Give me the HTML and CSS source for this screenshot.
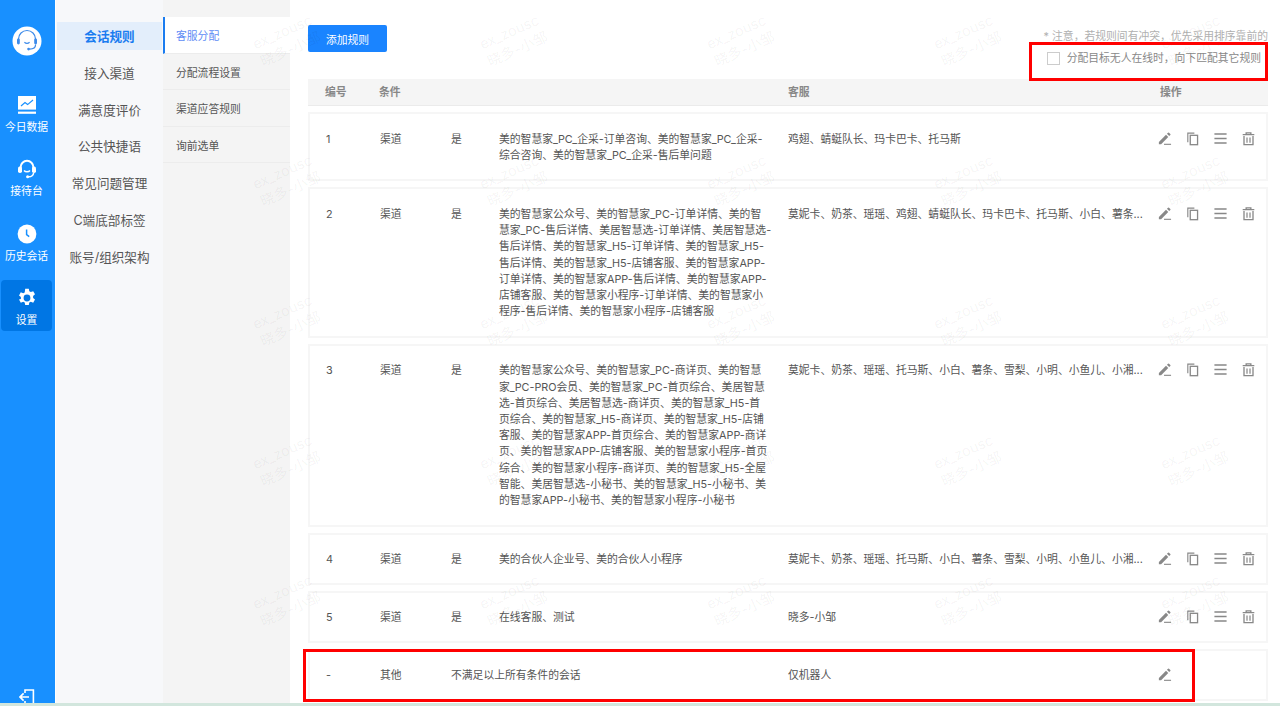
FILE: index.html
```html
<!DOCTYPE html>
<html lang="zh-CN">
<head>
    <meta charset="UTF-8">
    <meta name="viewport" content="width=device-width, initial-scale=1.0">
    <title>会话规则</title>
    <link rel="stylesheet" href="styles.css">
</head>
<body>
    <svg class="icon-defs" width="0" height="0">
        <defs>
            <symbol id="i-edit" viewBox="0 0 16 16"><path d="M2 11.6 9.6 4l2.4 2.4L4.4 14H2z" fill="currentColor"/><path d="M10.6 3 11.8 1.8a.7.7 0 0 1 1 0l1.4 1.4a.7.7 0 0 1 0 1L13 5.4z" fill="currentColor"/><path d="M7.5 14.2H15" stroke="currentColor" stroke-width="1.2"/></symbol>
            <symbol id="i-copy" viewBox="0 0 16 16"><path d="M3 12V2.2h7" fill="none" stroke="currentColor" stroke-width="1.2"/><rect x="5.6" y="4.6" width="7.8" height="10" fill="none" stroke="currentColor" stroke-width="1.4"/></symbol>
            <symbol id="i-menu" viewBox="0 0 16 16"><path d="M1.5 3.2h13M1.5 8h13M1.5 12.8h13" stroke="currentColor" stroke-width="1.5"/></symbol>
            <symbol id="i-trash" viewBox="0 0 16 16"><path d="M1.8 3.9h12.4M5.5 3.6V2h5v1.6" fill="none" stroke="currentColor" stroke-width="1.4"/><path d="M3.2 5.4v9.2h9.6V5.4" fill="none" stroke="currentColor" stroke-width="1.4"/><path d="M6.4 7v5.4M9.6 7v5.4" stroke="currentColor" stroke-width="1.3"/></symbol>
        </defs>
    </svg>

    <div class="app">
        <nav class="nav">
            <div class="nav-logo">
                <svg width="30" height="30" viewBox="0 0 30 30">
                    <circle cx="15" cy="15" r="14.5" fill="#fff"/>
                    <path d="M6.5 15.5v-2.5a8.5 8.5 0 0 1 17 0v2.5" fill="none" stroke="#3d8bea" stroke-width="1.2"/>
                    <rect x="5" y="12.4" width="2.8" height="6" rx="1.4" fill="#3d8bea"/>
                    <rect x="22.2" y="12.4" width="2.8" height="6" rx="1.4" fill="#3d8bea"/>
                    <path d="M23.6 18.5c0 3-2.8 4.6-6 4.6" fill="none" stroke="#3d8bea" stroke-width="1.2"/>
                    <circle cx="16.6" cy="23.1" r="1.4" fill="#3d8bea"/>
                    <path d="M12.4 16.2c1.4 1.2 3.8 1.2 5.2 0" fill="none" stroke="#3d8bea" stroke-width="1.2"/>
                </svg>
            </div>
            <a class="nav-item">
                <svg width="20" height="20" viewBox="0 0 20 20">
                    <path d="M1 1h18v13.6H1z" fill="#fff"/>
                    <path d="M4 11l4-3.4 2.6 2L16 5" fill="none" stroke="#1890ff" stroke-width="1.2"/>
                    <rect x="1" y="16.6" width="18" height="2.2" fill="#fff"/>
                </svg>
                <span>今日数据</span>
            </a>
            <a class="nav-item">
                <svg width="20" height="20" viewBox="0 0 20 20">
                    <path d="M3.6 10V8.2a6.4 6.4 0 0 1 12.8 0V10" fill="none" stroke="#fff" stroke-width="2"/>
                    <rect x="1" y="7.6" width="4" height="6.4" rx="1.8" fill="#fff"/>
                    <rect x="15" y="7.6" width="4" height="6.4" rx="1.8" fill="#fff"/>
                    <path d="M7 11.5c1.4 1.7 4.6 1.7 6 0" fill="none" stroke="#fff" stroke-width="1.4"/>
                    <path d="M16.6 14c-.3 2.6-2.6 3.8-5 3.8" fill="none" stroke="#fff" stroke-width="1.5"/>
                    <circle cx="10.6" cy="17.8" r="1.5" fill="#fff"/>
                </svg>
                <span>接待台</span>
            </a>
            <a class="nav-item">
                <svg width="20" height="20" viewBox="0 0 20 20">
                    <circle cx="10" cy="10" r="9.4" fill="#fff"/>
                    <path d="M9.6 5.4v5.2l2.6 2" fill="none" stroke="#1890ff" stroke-width="1.5"/>
                </svg>
                <span>历史会话</span>
            </a>
            <a class="nav-item active">
                <svg width="20" height="20" viewBox="0 0 20 20">
                    <path fill="#fff" fill-rule="evenodd" d="M8.2.8h3.6l.5 2.5 1.5.8 2.4-.9 1.8 3.1-1.9 1.7v1.9l1.9 1.7-1.8 3.1-2.4-.9-1.5.8-.5 2.5H8.2l-.5-2.5-1.5-.8-2.4.9-1.8-3.1L3.9 11V9.1L2 7.4l1.8-3.1 2.4.9 1.5-.8zM10 6.6a3.4 3.4 0 1 0 0 6.8 3.4 3.4 0 0 0 0-6.8z"/>
                </svg>
                <span>设置</span>
            </a>
            <div class="nav-exit">
                <svg width="16" height="16" viewBox="0 0 16 16">
                    <path d="M6 4V1h8.4v14H6v-3" fill="none" stroke="#fff" stroke-width="1.6"/>
                    <path d="M1 8h9M4.6 4.4 1 8l3.6 3.6" fill="none" stroke="#fff" stroke-width="1.6"/>
                </svg>
            </div>
        </nav>

        <aside class="menu">
            <a class="menu-item active">会话规则</a>
            <a class="menu-item">接入渠道</a>
            <a class="menu-item">满意度评价</a>
            <a class="menu-item">公共快捷语</a>
            <a class="menu-item">常见问题管理</a>
            <a class="menu-item">C端底部标签</a>
            <a class="menu-item">账号/组织架构</a>
        </aside>

        <aside class="submenu">
            <a class="submenu-item active">客服分配</a>
            <a class="submenu-item">分配流程设置</a>
            <a class="submenu-item">渠道应答规则</a>
            <a class="submenu-item">询前选单</a>
        </aside>

        <main class="content">
            <div class="toolbar">
                <button class="btn-add" type="button">添加规则</button>
                <div class="toolbar-side">
                    <p class="note">* 注意，若规则间有冲突，优先采用排序靠前的</p>
                    <label class="check">
                        <span class="check-box"></span>
                        <span class="check-label">分配目标无人在线时，向下匹配其它规则</span>
                    </label>
                </div>
            </div>

            <div class="rule-head">
                <span>编号</span>
                <span>条件</span>
                <span></span>
                <span></span>
                <span>客服</span>
                <span>操作</span>
            </div>

            <div class="rule">
                <span>1</span>
                <span>渠道</span>
                <span>是</span>
                <p class="rule-text">美的智慧家_PC_企采-订单咨询、美的智慧家_PC_企采-<br>综合咨询、美的智慧家_PC_企采-售后单问题</p>
                <p class="rule-agents">鸡翅、蜻蜓队长、玛卡巴卡、托马斯</p>
                <div class="ops">
                    <svg class="op"><use href="#i-edit"/></svg>
                    <svg class="op"><use href="#i-copy"/></svg>
                    <svg class="op"><use href="#i-menu"/></svg>
                    <svg class="op"><use href="#i-trash"/></svg>
                </div>
            </div>

            <div class="rule">
                <span>2</span>
                <span>渠道</span>
                <span>是</span>
                <p class="rule-text">美的智慧家公众号、美的智慧家_PC-订单详情、美的智<br>慧家_PC-售后详情、美居智慧选-订单详情、美居智慧选-<br>售后详情、美的智慧家_H5-订单详情、美的智慧家_H5-<br>售后详情、美的智慧家_H5-店铺客服、美的智慧家APP-<br>订单详情、美的智慧家APP-售后详情、美的智慧家APP-<br>店铺客服、美的智慧家小程序-订单详情、美的智慧家小<br>程序-售后详情、美的智慧家小程序-店铺客服</p>
                <p class="rule-agents">莫妮卡、奶茶、瑶瑶、鸡翅、蜻蜓队长、玛卡巴卡、托马斯、小白、薯条...</p>
                <div class="ops">
                    <svg class="op"><use href="#i-edit"/></svg>
                    <svg class="op"><use href="#i-copy"/></svg>
                    <svg class="op"><use href="#i-menu"/></svg>
                    <svg class="op"><use href="#i-trash"/></svg>
                </div>
            </div>

            <div class="rule">
                <span>3</span>
                <span>渠道</span>
                <span>是</span>
                <p class="rule-text">美的智慧家公众号、美的智慧家_PC-商详页、美的智慧<br>家_PC-PRO会员、美的智慧家_PC-首页综合、美居智慧<br>选-首页综合、美居智慧选-商详页、美的智慧家_H5-首<br>页综合、美的智慧家_H5-商详页、美的智慧家_H5-店铺<br>客服、美的智慧家APP-首页综合、美的智慧家APP-商详<br>页、美的智慧家APP-店铺客服、美的智慧家小程序-首页<br>综合、美的智慧家小程序-商详页、美的智慧家_H5-全屋<br>智能、美居智慧选-小秘书、美的智慧家_H5-小秘书、美<br>的智慧家APP-小秘书、美的智慧家小程序-小秘书</p>
                <p class="rule-agents">莫妮卡、奶茶、瑶瑶、托马斯、小白、薯条、雪梨、小明、小鱼儿、小湘...</p>
                <div class="ops">
                    <svg class="op"><use href="#i-edit"/></svg>
                    <svg class="op"><use href="#i-copy"/></svg>
                    <svg class="op"><use href="#i-menu"/></svg>
                    <svg class="op"><use href="#i-trash"/></svg>
                </div>
            </div>

            <div class="rule rule-single">
                <span>4</span>
                <span>渠道</span>
                <span>是</span>
                <p class="rule-text">美的合伙人企业号、美的合伙人小程序</p>
                <p class="rule-agents">莫妮卡、奶茶、瑶瑶、托马斯、小白、薯条、雪梨、小明、小鱼儿、小湘...</p>
                <div class="ops">
                    <svg class="op"><use href="#i-edit"/></svg>
                    <svg class="op"><use href="#i-copy"/></svg>
                    <svg class="op"><use href="#i-menu"/></svg>
                    <svg class="op"><use href="#i-trash"/></svg>
                </div>
            </div>

            <div class="rule rule-single">
                <span>5</span>
                <span>渠道</span>
                <span>是</span>
                <p class="rule-text">在线客服、测试</p>
                <p class="rule-agents">晓多-小邹</p>
                <div class="ops">
                    <svg class="op"><use href="#i-edit"/></svg>
                    <svg class="op"><use href="#i-copy"/></svg>
                    <svg class="op"><use href="#i-menu"/></svg>
                    <svg class="op"><use href="#i-trash"/></svg>
                </div>
            </div>

            <div class="rule rule-single">
                <span>-</span>
                <span>其他</span>
                <p class="rule-wide">不满足以上所有条件的会话</p>
                <p class="rule-agents">仅机器人</p>
                <div class="ops">
                    <svg class="op"><use href="#i-edit"/></svg>
                </div>
            </div>
        </main>
    </div>

    <div class="bottom-line"></div>

    <!-- 水印 -->
    <div class="watermarks">
        <div class="wm"><span>ex_zousc</span><span>晓多-小邹</span></div>
        <div class="wm"><span>ex_zousc</span><span>晓多-小邹</span></div>
        <div class="wm"><span>ex_zousc</span><span>晓多-小邹</span></div>
        <div class="wm"><span>ex_zousc</span><span>晓多-小邹</span></div>
        <div class="wm"><span>ex_zousc</span><span>晓多-小邹</span></div>
        <div class="wm"><span>ex_zousc</span><span>晓多-小邹</span></div>
        <div class="wm"><span>ex_zousc</span><span>晓多-小邹</span></div>
        <div class="wm"><span>ex_zousc</span><span>晓多-小邹</span></div>
        <div class="wm"><span>ex_zousc</span><span>晓多-小邹</span></div>
        <div class="wm"><span>ex_zousc</span><span>晓多-小邹</span></div>
        <div class="wm"><span>ex_zousc</span><span>晓多-小邹</span></div>
        <div class="wm"><span>ex_zousc</span><span>晓多-小邹</span></div>
        <div class="wm"><span>ex_zousc</span><span>晓多-小邹</span></div>
        <div class="wm"><span>ex_zousc</span><span>晓多-小邹</span></div>
        <div class="wm"><span>ex_zousc</span><span>晓多-小邹</span></div>
        <div class="wm"><span>ex_zousc</span><span>晓多-小邹</span></div>
        <div class="wm"><span>ex_zousc</span><span>晓多-小邹</span></div>
        <div class="wm"><span>ex_zousc</span><span>晓多-小邹</span></div>
        <div class="wm"><span>ex_zousc</span><span>晓多-小邹</span></div>
        <div class="wm"><span>ex_zousc</span><span>晓多-小邹</span></div>
        <div class="wm"><span>ex_zousc</span><span>晓多-小邹</span></div>
        <div class="wm"><span>ex_zousc</span><span>晓多-小邹</span></div>
        <div class="wm"><span>ex_zousc</span><span>晓多-小邹</span></div>
        <div class="wm"><span>ex_zousc</span><span>晓多-小邹</span></div>
        <div class="wm"><span>ex_zousc</span><span>晓多-小邹</span></div>
    </div>

    <!-- 红框标注 -->
    <div class="mark mark-top"></div>
    <div class="mark mark-bottom"></div>
</body>
</html>
```

FILE: styles.css
```css
* {
    box-sizing: border-box;
}

html, body {
    height: 100%;
}

body {
    margin: 0;
    background-color: #fff;
    color: #555;
    font-family: Inter, "Noto Sans CJK SC", sans-serif;
    font-size: 10.8px;
    overflow: hidden;
    position: relative;
}

p {
    margin: 0;
}

.icon-defs {
    position: absolute;
}

.app {
    display: flex;
    height: 703px;
}

/* 左侧导航 */
.nav {
    width: 55px;
    flex-shrink: 0;
    background-color: #1890ff;
    display: flex;
    flex-direction: column;
    align-items: center;
    color: #fff;
    padding: 26px 3px 0 1px;
    margin-right: 2px;
    overflow: hidden;
}

.nav-logo {
    height: 30px;
    margin-bottom: 31px;
}

.nav-item {
    width: 51px;
    height: 51px;
    display: flex;
    flex-direction: column;
    align-items: center;
    padding-top: 8px;
    gap: 5px;
    margin-bottom: 13.3px;
    border-radius: 4px;
    line-height: 15px;
}

.nav-item svg {
    display: block;
}

.nav-item.active {
    background-color: #0076e4;
}

.nav-exit {
    margin-top: auto;
    margin-bottom: -2px;
    height: 16px;
}

/* 二级菜单 */
.menu {
    width: 107px;
    flex-shrink: 0;
    background-color: #f7f8fa;
    padding: 22px 1px 0;
    margin-left: -1px;
    display: flex;
    flex-direction: column;
}

.menu-item {
    height: 28px;
    line-height: 29px;
    margin-bottom: 8.8px;
    text-align: center;
    font-size: 12.6px;
    color: #555;
}

.menu-item.active {
    background-color: #e3eefb;
    color: #1a7cf0;
    font-weight: 700;
}

/* 三级菜单 */
.submenu {
    width: 127px;
    flex-shrink: 0;
    background-color: #f4f4f4;
    padding-top: 17px;
}

.submenu-item {
    display: block;
    height: 36.6px;
    line-height: 39px;
    padding-left: 13px;
    border-bottom: 1px solid #ececec;
    color: #555;
}

.submenu-item.active {
    background-color: #fff;
    color: #5f8df5;
    border-left: 2px solid #1a7cf0;
    padding-left: 11px;
}

/* 内容区 */
.content {
    flex: 1;
    padding: 25px 12px 0 18px;
    min-width: 0;
}

.toolbar {
    display: flex;
    justify-content: space-between;
    align-items: flex-start;
    height: 54px;
}

.btn-add {
    width: 79px;
    height: 27px;
    background-color: #1a84ff;
    color: #fff;
    border: none;
    border-radius: 2px;
    font-family: inherit;
    font-size: 10.8px;
    padding: 0;
}

.toolbar-side {
    display: flex;
    flex-direction: column;
    align-items: flex-end;
}

.note {
    color: #b0b0b0;
    line-height: 20px;
    margin-top: 2px;
}

.check {
    display: flex;
    align-items: center;
    gap: 7px;
    color: #888;
    line-height: 18px;
    margin-top: 2px;
    margin-right: 7px;
}

.check-label {
    padding-top: 1px;
}

.check-box {
    width: 13px;
    height: 13px;
    background-color: #fff;
    border: 1px solid #ccc;
}

.rule-head,
.rule {
    display: grid;
    grid-template-columns: 54px 71px 48px 289px 370px 1fr;
    padding-left: 16px;
    line-height: 16.2px;
}

.rule-head {
    height: 27px;
    align-items: center;
    grid-template-columns: 54px 71px 48px 290px 372px 1fr;
    padding-top: 2px;
    padding-left: 17px;
    background-color: #f5f5f5;
    border-bottom: 1px solid #ebebeb;
    color: #888;
    font-weight: 600;
    margin-bottom: 6px;
}

.rule {
    border: 2px solid #f6f6f6;
    padding-top: 17.5px;
    padding-bottom: 15.5px;
    margin-bottom: 6px;
    color: #555;
}

.rule-single {
    padding-top: 17px;
    padding-bottom: 15px;
}

.rule-text {
    white-space: nowrap;
}

.rule-wide {
    grid-column: span 2;
}

.rule-agents {
    white-space: nowrap;
}

.ops {
    display: flex;
    gap: 13px;
    height: 16px;
    margin-left: -1px;
}

.op {
    width: 15px;
    height: 15px;
    color: #888;
    margin-top: -1px;
    flex-shrink: 0;
}

.bottom-line {
    height: 3px;
    background-color: #d2e6dd;
}

/* 水印 */
.watermarks {
    position: absolute;
    left: 253px;
    top: 0;
    display: grid;
    grid-template-columns: repeat(4, 227px) 119px;
    grid-auto-rows: 140px;
    pointer-events: none;
}

.wm {
    display: flex;
    flex-direction: column;
    align-items: flex-start;
    padding-top: 34.5px;
    transform-origin: 0 44px;
    transform: rotate(-24deg);
    color: rgba(0, 0, 0, 0.05);
    font-size: 14.4px;
    line-height: 19px;
}

/* 红框标注 */
.mark {
    position: absolute;
    border: 3px solid #f00;
    pointer-events: none;
}

.mark-top {
    left: 1029px;
    top: 42px;
    width: 239px;
    height: 39px;
}

.mark-bottom {
    left: 303px;
    top: 649px;
    width: 892px;
    height: 53px;
}
```
